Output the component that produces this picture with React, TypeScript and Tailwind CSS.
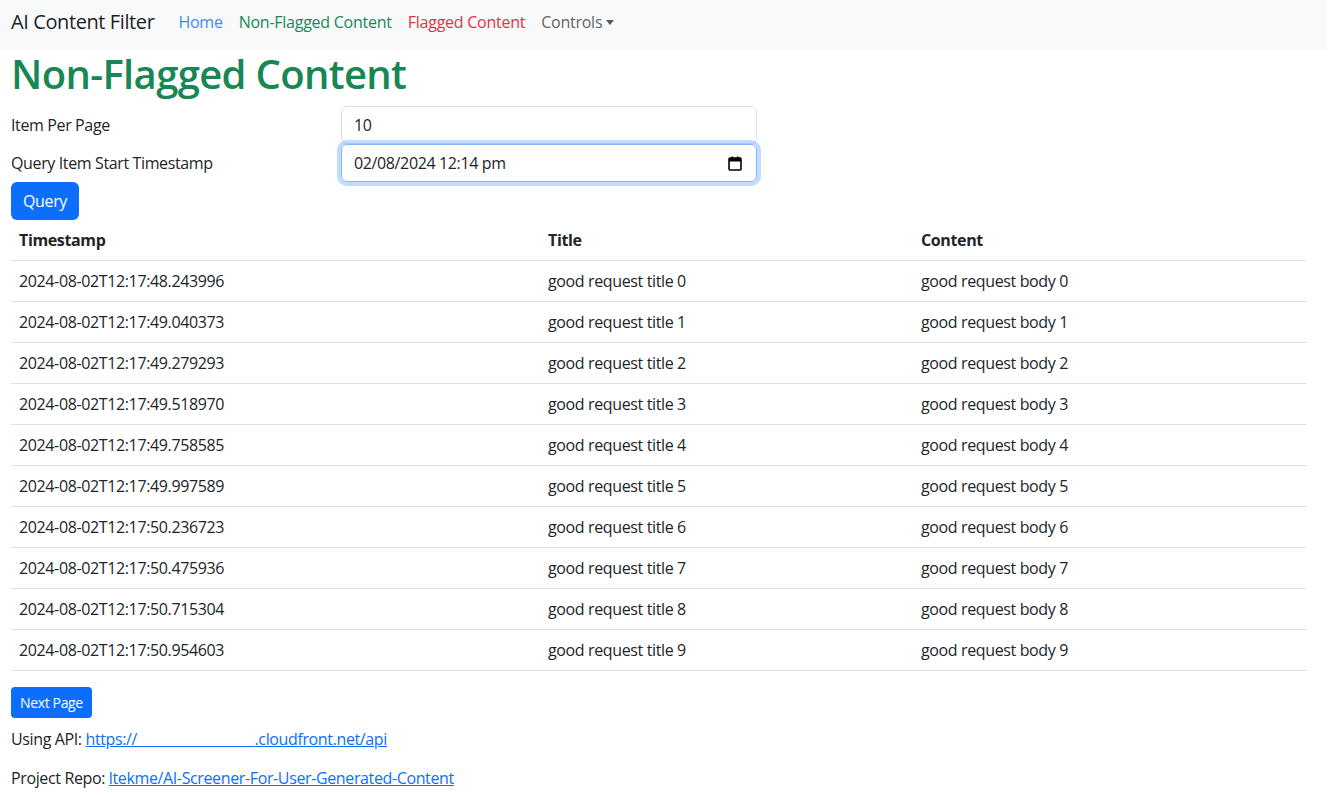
import React from "react";

const rows = [
  "2024-08-02T12:17:48.243996",
  "2024-08-02T12:17:49.040373",
  "2024-08-02T12:17:49.279293",
  "2024-08-02T12:17:49.518970",
  "2024-08-02T12:17:49.758585",
  "2024-08-02T12:17:49.997589",
  "2024-08-02T12:17:50.236723",
  "2024-08-02T12:17:50.475936",
  "2024-08-02T12:17:50.715304",
  "2024-08-02T12:17:50.954603",
];

export default function App() {
  return (
    <div
      className="min-h-screen bg-white text-[#212529] text-[16px] leading-[24px] tracking-[-0.37px]"
      style={{ fontFamily: '"Open Sans", "Noto Sans", Arial, sans-serif' }}
    >
      <nav className="w-[1326px] h-[49px] bg-[#f8f9fa] flex items-center pl-[11px] pb-[5px]">
        <span className="text-[20px] leading-[30px] text-black/90 mr-[16px] tracking-[-0.4px]">AI Content Filter</span>
        <div className="flex items-center tracking-[-0.25px]">
          <a className="px-[8px] text-[#0d6efd] opacity-80">Home</a>
          <a className="px-[8px] text-[#198754]">Non-Flagged Content</a>
          <a className="px-[8px] text-[#dc3545]">Flagged Content</a>
          <a className="px-[8px] text-black/65 flex items-center">
            Controls
            <span className="ml-[4px] inline-block w-0 h-0 border-l-[4px] border-r-[4px] border-t-[5px] border-l-transparent border-r-transparent border-t-black/65"></span>
          </a>
        </div>
      </nav>

      <div className="pl-[11px] pr-[25px]">
        <h1 className="text-[40px] leading-[48px] font-semibold text-[#198754] mt-[1px] mb-[8px] tracking-[-0.65px]">
          Non-Flagged Content
        </h1>

        <div className="flex items-center h-[38px]">
          <label className="w-[330px]">Item Per Page</label>
          <div className="w-[416px] h-[38px] border border-[#dee2e6] rounded-[6px] px-[12px] flex items-center">
            10
          </div>
        </div>
        <div className="flex items-center h-[38px]">
          <label className="w-[330px]">Query Item Start Timestamp</label>
          <div className="w-[416px] h-[38px] border border-[#86b7fe] rounded-[6px] pl-[12px] pr-[14px] flex items-center justify-between shadow-[0_0_0_4px_rgba(13,110,253,0.25)]">
            <span>02/08/2024 12:14 pm</span>
            <svg width="14" height="15" viewBox="0 0 14 15">
              <rect x="1" y="2" width="12" height="12" rx="1" fill="none" stroke="#000" strokeWidth="1.6" />
              <rect x="1" y="2" width="12" height="3.5" fill="#000" />
              <rect x="3.5" y="0.5" width="1.6" height="3" fill="#000" />
              <rect x="8.9" y="0.5" width="1.6" height="3" fill="#000" />
            </svg>
          </div>
        </div>
        <button className="bg-[#0d6efd] text-white rounded-[6px] h-[38px] px-[12px] mt-0">Query</button>

        <table className="w-full border-collapse">
          <thead>
            <tr className="border-b border-[#dee2e6]">
              <th className="text-left font-bold px-[8px] py-[8px] w-[529px]">Timestamp</th>
              <th className="text-left font-bold px-[8px] py-[8px] w-[373px]">Title</th>
              <th className="text-left font-bold px-[8px] py-[8px]">Content</th>
            </tr>
          </thead>
          <tbody>
            {rows.map((t, i) => (
              <tr key={i} className="border-b border-[#dee2e6]">
                <td className="px-[8px] py-[8px]">{t}</td>
                <td className="px-[8px] py-[8px]">good request title {i}</td>
                <td className="px-[8px] py-[8px]">good request body {i}</td>
              </tr>
            ))}
          </tbody>
        </table>

        <button className="mt-[16px] bg-[#0d6efd] text-white rounded-[4px] h-[31px] px-[9px] text-[14px] leading-[21px] tracking-[-0.35px]">
          Next Page
        </button>

        <p className="mt-[9px] mb-[15px]">
          Using API:{" "}
          <a className="text-[#0d6efd] underline">
            https://{"\u00A0".repeat(31)}.cloudfront.net/api
          </a>
        </p>
        <p>
          Project Repo:{" "}
          <a className="text-[#0d6efd] underline">ltekme/AI-Screener-For-User-Generated-Content</a>
        </p>
      </div>
    </div>
  );
}
